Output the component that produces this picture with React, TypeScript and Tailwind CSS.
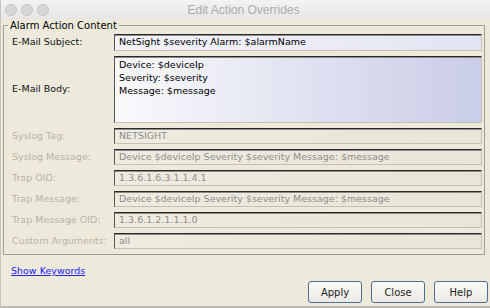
import { Fragment } from "react";

const fieldBase =
  "flex items-center pl-[4px] border-t border-t-[#2a2a2a] border-l border-l-[#555] border-r border-r-[#c4c1b3] border-b border-b-[#c4c1b3] shadow-[inset_0_1px_0_#8a8a8a] whitespace-nowrap overflow-hidden";

const disabledRows = [
  { label: "Syslog Tag:", value: "NETSIGHT" },
  { label: "Syslog Message:", value: "Device $deviceIp Severity $severity Message: $message" },
  { label: "Trap OID:", value: "1.3.6.1.6.3.1.1.4.1" },
  { label: "Trap Message:", value: "Device $deviceIp Severity $severity Message: $message" },
  { label: "Trap Message OID:", value: "1.3.6.1.2.1.1.1.0" },
  { label: "Custom Arguments:", value: "all" },
];

function MacButton({ label }: { label: string }) {
  return (
    <button className="w-[54px] h-[22px] rounded-[3px] border border-[#4d6d8f] bg-gradient-to-b from-[#fbfbf8] to-[#ebeae2] text-[10px] text-[#222]">
      {label}
    </button>
  );
}

export default function App() {
  return (
    <div
      className="w-[490px] h-[308px] overflow-hidden flex flex-col bg-[#edeadc] border-l border-l-[#c4c4c4]"
      style={{ fontFamily: '"DejaVu Sans", sans-serif' }}
    >
      {/* Title bar */}
      <div className="h-[19px] shrink-0 flex items-center bg-gradient-to-b from-[#f3f3f3] to-[#e6e6e6]">
        <div className="flex gap-[4px] pl-[4px]">
          <span className="w-[12px] h-[12px] rounded-full bg-[#d6d6d6] border border-[#c6c6c6]" />
          <span className="w-[12px] h-[12px] rounded-full bg-[#d6d6d6] border border-[#c6c6c6]" />
          <span className="w-[12px] h-[12px] rounded-full bg-[#d6d6d6] border border-[#c6c6c6]" />
        </div>
        <div
          className="flex-1 text-center text-[12px] text-[#acacac] pr-[52px]"
          style={{ fontFamily: '"Liberation Sans", sans-serif' }}
        >
          Edit Action Overrides
        </div>
      </div>

      {/* Group box */}
      <fieldset className="shrink-0 ml-[2px] mr-[5px] border border-[#a19e91] pl-[8px] pr-[2px] pb-[5px] text-[9.5px]">
        <legend className="-ml-[4px] px-[2px] text-[10px] text-black leading-[13px]">
          Alarm Action Content
        </legend>
        <div className="grid grid-cols-[102px_1fr] grid-rows-[17px_67px_repeat(6,16px)] gap-y-[5px] items-center mt-[2px]">
          <div className="text-[#111]">E-Mail Subject:</div>
          <div className={`${fieldBase} h-[17px] bg-gradient-to-r from-[#f3f3f9] to-[#e3e5f3] text-black`}>
            NetSight $severity Alarm: $alarmName
          </div>

          <div className="text-[#111]">E-Mail Body:</div>
          <div className="h-[67px] pl-[4px] pt-[1px] leading-[13px] border-t border-t-[#2a2a2a] border-l border-l-[#555] border-r border-r-[#c4c1b3] border-b border-b-[#c4c1b3] shadow-[inset_0_1px_0_#8a8a8a] bg-gradient-to-r from-[#fafafc] to-[#c9cde7] text-black">
            <div>Device: $deviceIp</div>
            <div>Severity: $severity</div>
            <div>Message: $message</div>
          </div>

          {disabledRows.map((r) => (
            <Fragment key={r.label}>
              <div className="text-[#b6b3a6] whitespace-nowrap">{r.label}</div>
              <div className={`${fieldBase} h-[16px] bg-gradient-to-r from-[#eeebdf] to-[#e9e6d7] text-[#8e8e8e]`}>
                {r.value}
              </div>
            </Fragment>
          ))}
        </div>
      </fieldset>

      {/* Footer */}
      <div className="flex-1 flex flex-col px-[10px] pt-[9px]">
        <a href="#" className="text-[9.5px] text-[#2323f0] underline self-start leading-[13px]">
          Show Keywords
        </a>
        <div className="flex justify-end gap-[9px] mt-[4px] -mr-[8px]">
          <MacButton label="Apply" />
          <MacButton label="Close" />
          <MacButton label="Help" />
        </div>
      </div>
      <div className="h-[2px] shrink-0 bg-[#b9b9b9]" />
    </div>
  );
}
